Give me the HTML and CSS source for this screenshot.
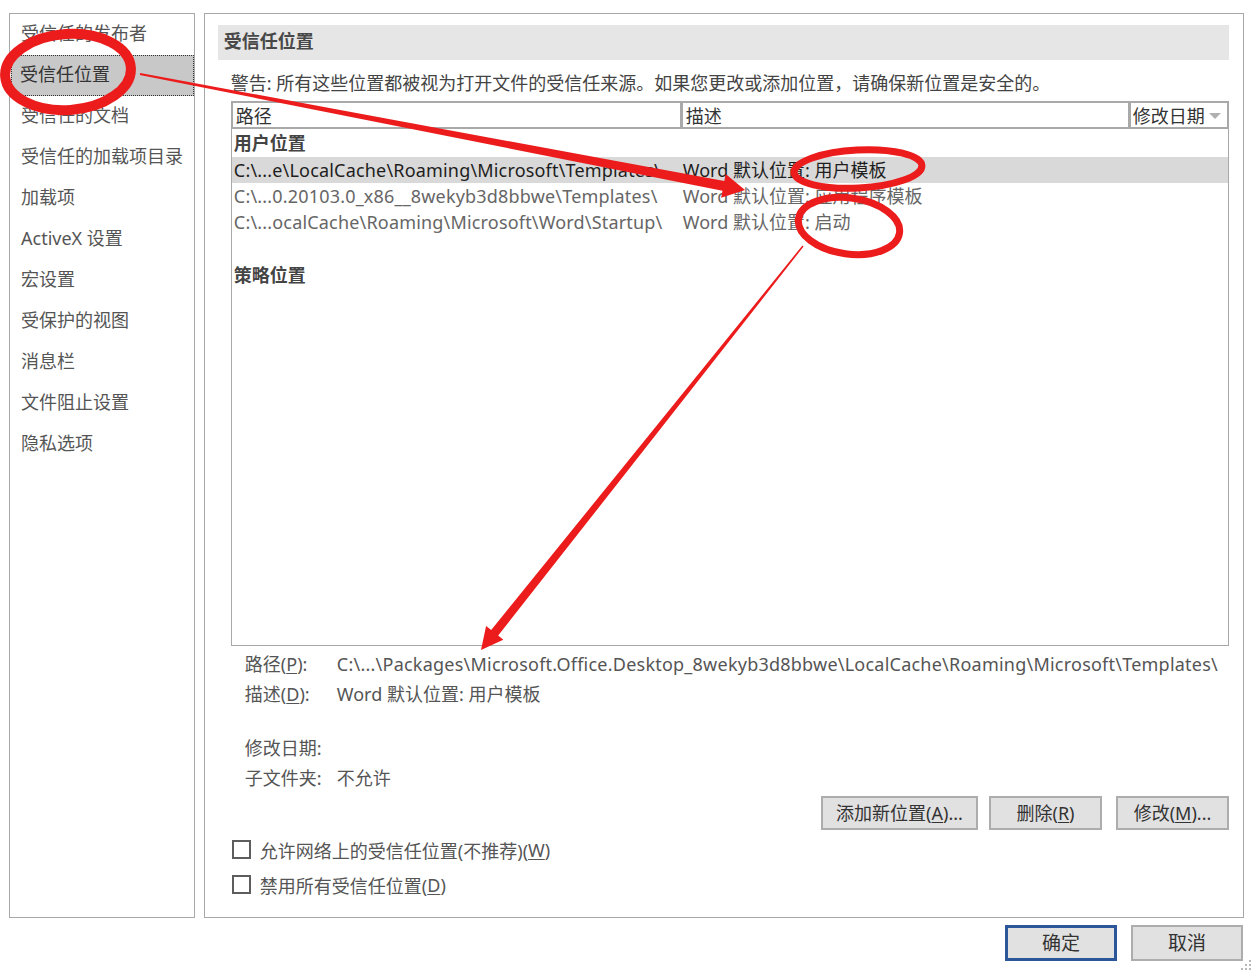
FILE: index.html
```html
<!DOCTYPE html>
<html lang="zh-CN">
<head>
<meta charset="utf-8">
<title>信任中心</title>
<link rel="stylesheet" href="styles.css">
</head>
<body>
<div class="dialog">
  <div class="body-row">
    <nav class="sidebar">
      <div class="nav-item">受信任的发布者</div>
      <div class="nav-item selected">受信任位置</div>
      <div class="nav-item">受信任的文档</div>
      <div class="nav-item">受信任的加载项目录</div>
      <div class="nav-item">加载项</div>
      <div class="nav-item">ActiveX 设置</div>
      <div class="nav-item">宏设置</div>
      <div class="nav-item">受保护的视图</div>
      <div class="nav-item">消息栏</div>
      <div class="nav-item">文件阻止设置</div>
      <div class="nav-item">隐私选项</div>
    </nav>
    <main class="panel">
      <div class="panel-title">受信任位置</div>
      <div class="content">
        <p class="warning">警告: 所有这些位置都被视为打开文件的受信任来源。如果您更改或添加位置，请确保新位置是安全的。</p>
        <div class="table">
          <div class="thead">
            <div class="th col-path">路径</div>
            <div class="th col-desc">描述</div>
            <div class="th col-date">修改日期<span class="sort-arrow"></span></div>
          </div>
          <div class="group">用户位置</div>
          <div class="trow active"><div class="td col-path">C:\...e\LocalCache\Roaming\Microsoft\Templates\</div><div class="td col-desc">Word 默认位置: 用户模板</div></div>
          <div class="trow"><div class="td col-path">C:\...0.20103.0_x86__8wekyb3d8bbwe\Templates\</div><div class="td col-desc">Word 默认位置: 应用程序模板</div></div>
          <div class="trow"><div class="td col-path">C:\...ocalCache\Roaming\Microsoft\Word\Startup\</div><div class="td col-desc">Word 默认位置: 启动</div></div>
          <div class="group spaced">策略位置</div>
        </div>
        <div class="details">
          <div class="detail"><span class="dl">路径(<u>P</u>):</span><span class="dv path">C:\...\Packages\Microsoft.Office.Desktop_8wekyb3d8bbwe\LocalCache\Roaming\Microsoft\Templates\</span></div>
          <div class="detail"><span class="dl">描述(<u>D</u>):</span><span class="dv">Word 默认位置: 用户模板</span></div>
          <div class="detail gap"><span class="dl">修改日期:</span><span class="dv"></span></div>
          <div class="detail"><span class="dl">子文件夹:</span><span class="dv">不允许</span></div>
        </div>
        <div class="actions">
          <button class="btn w-add">添加新位置(<u>A</u>)...</button>
          <button class="btn w-del">删除(<u>R</u>)</button>
          <button class="btn w-mod">修改(<u>M</u>)...</button>
        </div>
        <label class="check first"><span class="box"></span>允许网络上的受信任位置(不推荐)(<u>W</u>)</label>
        <label class="check"><span class="box"></span>禁用所有受信任位置(<u>D</u>)</label>
      </div>
    </main>
  </div>
  <div class="footer">
    <button class="btn dlg primary">确定</button>
    <button class="btn dlg">取消</button>
  </div>
  <svg class="grip" width="12" height="12" viewBox="0 0 12 12">
    <rect x="9" y="1" width="2" height="2" fill="#b8b8b8"/>
    <rect x="5" y="5" width="2" height="2" fill="#b8b8b8"/>
    <rect x="9" y="5" width="2" height="2" fill="#b8b8b8"/>
    <rect x="1" y="9" width="2" height="2" fill="#b8b8b8"/>
    <rect x="5" y="9" width="2" height="2" fill="#b8b8b8"/>
    <rect x="9" y="9" width="2" height="2" fill="#b8b8b8"/>
  </svg>
</div>
<svg class="marks" width="1253" height="972" viewBox="0 0 1253 972">
  <g fill="none" stroke="#ec1c1c">
    <ellipse cx="68" cy="72" rx="63" ry="38" stroke-width="10" transform="rotate(-4 68 72)"/>
    <ellipse cx="858" cy="169" rx="64" ry="19" stroke-width="7" transform="rotate(-3 858 169)"/>
    <ellipse cx="849" cy="226" rx="51" ry="28" stroke-width="7" transform="rotate(8 849 226)"/>
  </g>
  <g fill="#ec1c1c">
    <polygon points="140.2,73 724.3,181 725.7,174.1 745,190 721.1,197.7 722.5,190.8 139.8,75"/>
    <polygon points="802.4,245.5 491.2,630 486.1,625.9 481,650 503.3,639.7 498.2,635.6 803.6,246.5"/>
  </g>
</svg>
</body>
</html>
```
FILE: styles.css
```css
* { box-sizing: border-box; }
html, body { margin: 0; padding: 0; background: #fff; }
body {
  width: 1253px;
  height: 972px;
  overflow: hidden;
  position: relative;
  font-family: "Noto Sans", "Noto Sans CJK SC", sans-serif;
  font-size: 18px;
  color: #444;
}
.dialog { position: relative; width: 1253px; height: 972px; padding: 13px 9px 0 9px; }
.body-row { display: flex; gap: 9px; height: 905px; }

.sidebar {
  width: 186px;
  border: 1px solid #a8a8a8;
  display: flex;
  flex-direction: column;
}
.nav-item {
  height: 41px;
  line-height: 39px;
  padding-left: 11px;
  color: #555;
  white-space: nowrap;
}
.nav-item.selected {
  margin-left: 1px;
  padding-left: 9px;
  background: #c8c8c8;
  outline: 1px dotted #333;
  outline-offset: -1px;
  color: #333;
}

.panel {
  width: 1041px;
  border: 1px solid #a8a8a8;
  padding: 11px 14px 0 13px;
  display: flex;
  flex-direction: column;
}
.panel-title {
  height: 35px;
  line-height: 33px;
  background: #e6e6e6;
  padding-left: 6px;
  font-weight: bold;
  color: #484848;
}
.content { padding-left: 13px; display: flex; flex-direction: column; }
.warning { margin: 9px 0 0 0; height: 32px; line-height: 28px; color: #444; white-space: nowrap; }

.table {
  height: 545px;
  border: 1px solid #a8a8a8;
  border-top: none;
  display: flex;
  flex-direction: column;
}
.thead {
  display: flex;
  background: #a9a9a9;
  padding: 2px 1px 2px 1px;
  gap: 3px;
  height: 28px;
}
.th {
  background: #fff;
  line-height: 26px;
  padding-left: 3px;
  color: #333;
  white-space: nowrap;
  position: relative;
}
.th.col-path { width: 447px; }
.th.col-desc { width: 445px; }
.th.col-date { flex: 1; padding-left: 2px; }
.sort-arrow {
  position: absolute;
  right: 6px;
  top: 10px;
  width: 0; height: 0;
  border-left: 6px solid transparent;
  border-right: 6px solid transparent;
  border-top: 6px solid #b0b0b0;
}
.group { height: 28px; line-height: 28px; padding-left: 2px; font-weight: bold; color: #444; }
.group.spaced { margin-top: 26px; }
.trow { display: flex; height: 26px; line-height: 26px; color: #666; white-space: nowrap; }
.trow.active { background: #d9d9d9; color: #1e1e1e; }
.td { overflow: hidden; }
.td.col-path { width: 450px; padding-left: 2px; letter-spacing: 0.18px; }
.td.col-desc { flex: 1; padding-left: 1px; }

.details { margin-top: 3px; padding-left: 14px; }
.detail { display: flex; height: 30px; line-height: 30px; color: #555; white-space: nowrap; }
.detail.gap { margin-top: 24px; }
.dl { width: 92px; flex: none; }
.dv { color: #555; }
.dv.path { letter-spacing: 0.23px; }

.actions { display: flex; justify-content: flex-end; margin-top: 3px; gap: 11px; }
.btn {
  font: inherit;
  height: 34px;
  background: #e1e1e1;
  border: 2px solid #adadad;
  color: #333;
  padding: 0;
  line-height: 28px;
}
.w-add { width: 157px; }
.w-del { width: 113px; margin-right: 3px; }
.w-mod { width: 113px; }
u { text-decoration: underline; text-underline-offset: 2px; }

.check { display: flex; align-items: center; height: 35px; color: #555; white-space: nowrap; }
.check.first { margin-top: 2px; }
.box { width: 19px; height: 19px; border: 2px solid #5d5d5d; margin: 0 9px 0 1px; background: #fff; }

.footer { display: flex; justify-content: flex-end; gap: 14px; margin-top: 7px; padding-right: 1px; }
.btn.dlg { width: 112px; height: 36px; font-size: 19px; color: #333; }
.btn.primary { border: 3px solid #2b579a; }

.grip { position: absolute; right: 1px; bottom: 1px; }
.marks { position: absolute; left: 0; top: 0; pointer-events: none; }
```
